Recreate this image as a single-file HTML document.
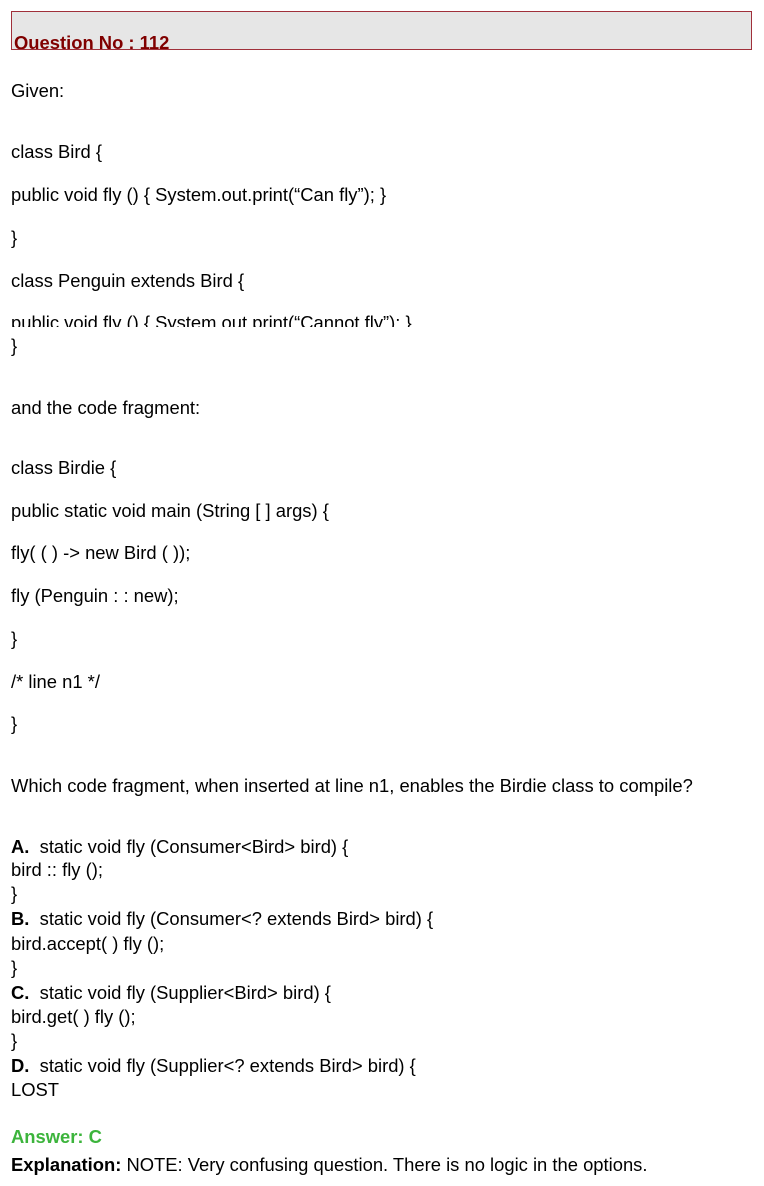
<!DOCTYPE html>
<html><head><meta charset="utf-8"><style>
body{margin:0;width:764px;height:1186px;background:#fff;position:relative;overflow:hidden;font-family:"Liberation Sans",Arial,sans-serif;font-size:18.4px;color:#000}
.l{position:absolute;left:11px;line-height:20px;white-space:pre}
.hd{position:absolute;left:11px;top:11px;width:739px;height:37px;background:#e6e6e6;border:1px solid #a0303a;overflow:hidden}
.hd span{position:absolute;left:2px;top:21px;font-weight:bold;color:#800000;font-size:18.4px;line-height:20px}
b{font-weight:bold}
</style></head><body>
<div class="hd"><span>Question No : 112</span></div>
<div class="l" style="top:81px">Given:</div>
<div class="l" style="top:142px">class Bird {</div>
<div class="l" style="top:185px">public void fly () { System.out.print(“Can fly”); }</div>
<div class="l" style="top:228px">}</div>
<div class="l" style="top:271px">class Penguin extends Bird {</div>
<div class="l" style="top:313px;height:14px;overflow:hidden">public void fly () { System.out.print(“Cannot fly”); }</div>
<div class="l" style="top:336px">}</div>
<div class="l" style="top:398px">and the code fragment:</div>
<div class="l" style="top:458px">class Birdie {</div>
<div class="l" style="top:501px">public static void main (String [ ] args) {</div>
<div class="l" style="top:543px">fly( ( ) -&gt; new Bird ( ));</div>
<div class="l" style="top:586px">fly (Penguin : : new);</div>
<div class="l" style="top:629px">}</div>
<div class="l" style="top:672px">/* line n1 */</div>
<div class="l" style="top:714px">}</div>
<div class="l" style="top:776px">Which code fragment, when inserted at line n1, enables the Birdie class to compile?</div>
<div class="l" style="top:837px"><b>A.</b>  static void fly (Consumer&lt;Bird&gt; bird) {</div>
<div class="l" style="top:860px">bird :: fly ();</div>
<div class="l" style="top:884px">}</div>
<div class="l" style="top:909px"><b>B.</b>  static void fly (Consumer&lt;? extends Bird&gt; bird) {</div>
<div class="l" style="top:934px">bird.accept( ) fly ();</div>
<div class="l" style="top:958px">}</div>
<div class="l" style="top:983px"><b>C.</b>  static void fly (Supplier&lt;Bird&gt; bird) {</div>
<div class="l" style="top:1007px">bird.get( ) fly ();</div>
<div class="l" style="top:1031px">}</div>
<div class="l" style="top:1056px"><b>D.</b>  static void fly (Supplier&lt;? extends Bird&gt; bird) {</div>
<div class="l" style="top:1080px">LOST</div>
<div class="l" style="top:1127px;color:#3cb43c;font-weight:bold">Answer: C</div>
<div class="l" style="top:1155px"><b>Explanation:</b> NOTE: Very confusing question. There is no logic in the options.</div>
</body></html>
